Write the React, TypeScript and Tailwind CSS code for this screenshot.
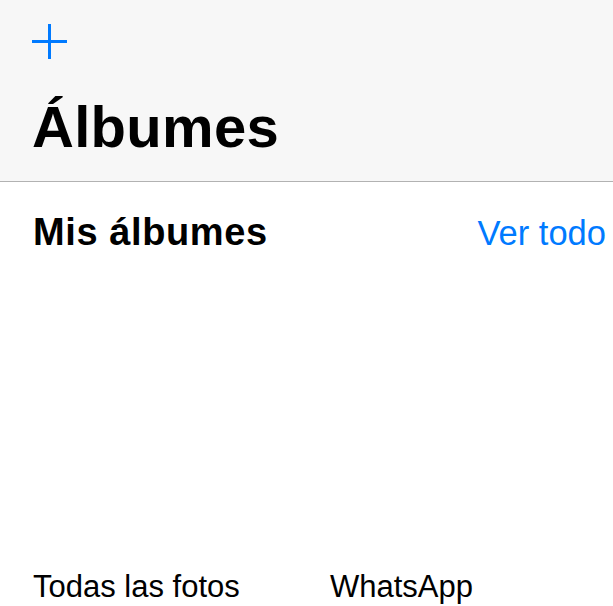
const albums = [
  { name: 'Todas las fotos' },
  { name: 'WhatsApp' },
];

export default function App() {
  return (
    <div className="h-[606px] w-[613px] overflow-hidden bg-white font-['Liberation_Sans',Arial,sans-serif] text-black">
      {/* Nav bar */}
      <header className="h-[182px] border-b border-[#b2b2b2] bg-[#f7f7f7] px-[32px] pt-[24px]">
        <button className="block h-[35px] w-[35px] text-[#007aff]" aria-label="Nuevo álbum">
          <svg viewBox="0 0 35 35" className="h-[35px] w-[35px]" fill="none" stroke="currentColor" strokeWidth="3">
            <path d="M17.5 0v35M0 17.5h35" />
          </svg>
        </button>
        <h1 className="mt-[39px] text-[58px] font-bold leading-none tracking-[0.3px]">Álbumes</h1>
      </header>

      {/* Mis álbumes section */}
      <section className="pl-[33px] pr-[7px]">
        <div className="flex items-baseline justify-between pt-[31px]">
          <h2 className="text-[38px] font-bold leading-none tracking-[0.6px]">Mis álbumes</h2>
          <a className="text-[34.5px] leading-none text-[#007aff]">Ver todo</a>
        </div>
        <div className="mt-[320px] grid grid-cols-[297px_1fr]">
          {albums.map((a) => (
            <div key={a.name} className="text-[31px] leading-none">
              {a.name}
            </div>
          ))}
        </div>
      </section>
    </div>
  );
}
